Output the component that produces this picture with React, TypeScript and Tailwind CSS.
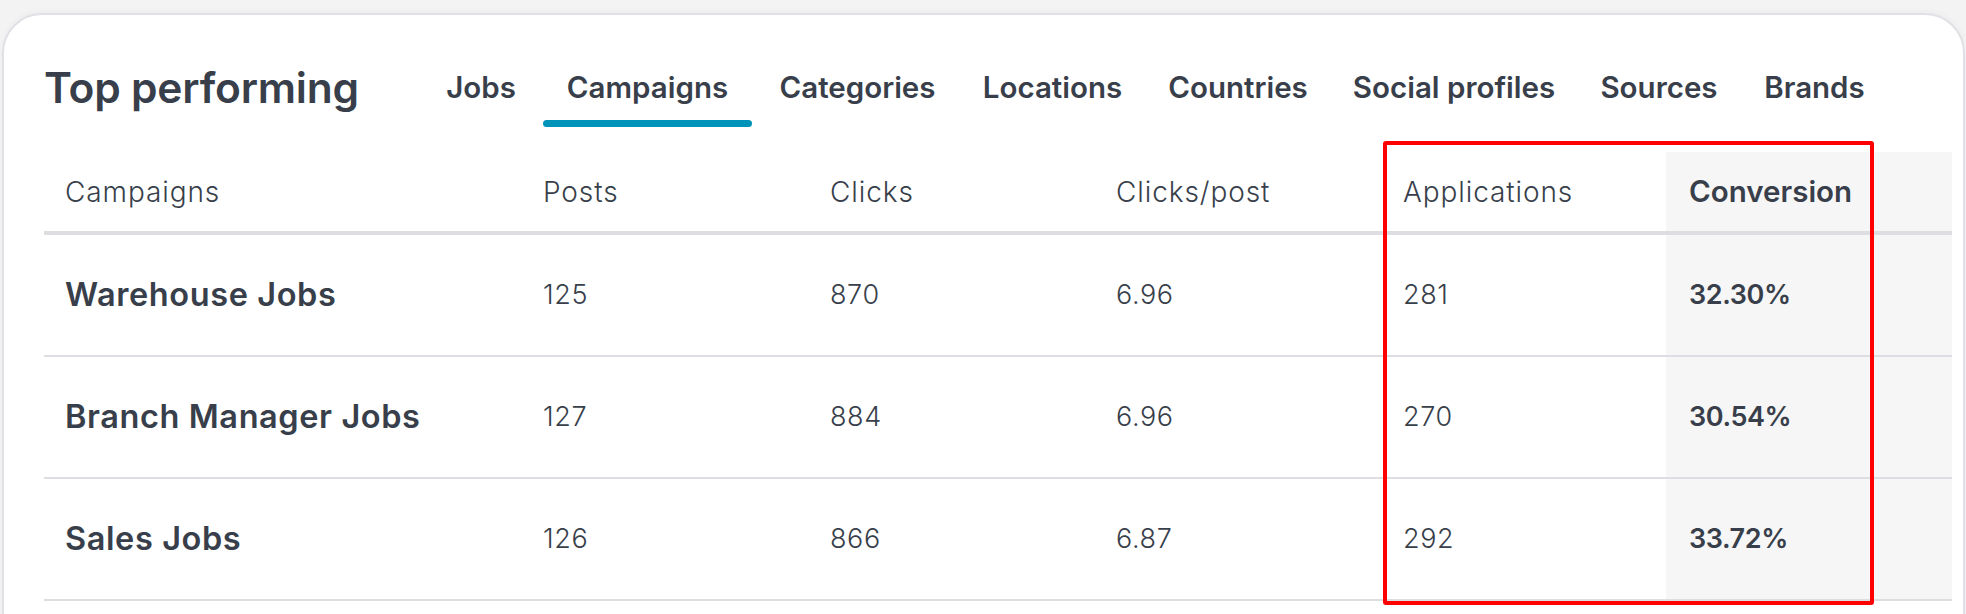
import React from "react";

const tabs = [
  { label: "Jobs", w: "w-[110px]" },
  { label: "Campaigns", w: "w-[209px]", active: true },
  { label: "Categories", w: "w-[197px]" },
  { label: "Locations", w: "w-[179px]" },
  { label: "Countries", w: "w-[178px]" },
  { label: "Social profiles", w: "w-[240px]" },
  { label: "Sources", w: "w-[156px]" },
  { label: "Brands", w: "w-[141px]" },
];

const rows = [
  ["Warehouse Jobs", "125", "870", "6.96", "281", "32.30%"],
  ["Branch Manager Jobs", "127", "884", "6.96", "270", "30.54%"],
  ["Sales Jobs", "126", "866", "6.87", "292", "33.72%"],
];

const font = { fontFamily: "Inter, 'Noto Sans', sans-serif" };

export default function App() {
  return (
    <div className="w-[1966px] h-[614px] overflow-hidden bg-[#f3f3f3] pt-[13px] pl-[2px]" style={font}>
      <div className="relative h-[640px] w-[1963px] rounded-t-[40px] border-2 border-[#dfe1e5] bg-white text-[#383f4b] shadow-[0_-2px_6px_rgba(0,0,0,0.03)]">
        <div className="flex items-start pl-[40px] pt-[49px]">
          <h1 className="w-[382px] text-[42.5px] leading-[48px] font-semibold tracking-[-0.2px]">Top performing</h1>
          <div className="mt-[5px] flex gap-[7px]">
            {tabs.map((t) => (
              <div key={t.label} className={`${t.w} flex flex-col items-center`}>
                <span className="text-[29.5px] leading-[36px] font-semibold whitespace-nowrap">{t.label}</span>
                <span className={`mt-[15px] h-[7px] w-full rounded-full ${t.active ? "bg-[#0093ba]" : "bg-transparent"}`} />
              </div>
            ))}
          </div>
        </div>

        <div className="mt-[25px] ml-[40px] grid grid-cols-[476px_287px_286px_287px_286px_286px]">
          {["Campaigns", "Posts", "Clicks", "Clicks/post", "Applications", "Conversion"].map((h, i) => (
            <div
              key={h}
              className={`flex h-[83px] items-center border-b-[4px] border-[#dcdee2] ${i === 0 ? "pl-[21px]" : "pl-[23px]"} ${
                i === 5 ? "bg-[#f6f6f6] text-[29.5px] font-semibold" : "text-[28px] font-light tracking-[0.9px]"
              }`}
            >
              {h}
            </div>
          ))}
          {rows.map((r) =>
            r.map((c, i) => (
              <div
                key={r[0] + i}
                className={`flex h-[122px] items-center border-b-2 border-[#dcdee2] ${i === 0 ? "pl-[21px]" : "pl-[23px]"} ${
                  i === 0
                    ? "text-[32.5px] font-semibold tracking-[0.6px]"
                    : i === 5
                    ? "bg-[#f6f6f6] text-[27px] font-semibold tracking-[-0.4px]"
                    : "text-[27px] font-light tracking-[0.6px]"
                }`}
              >
                {c}
              </div>
            ))
          )}
        </div>

        <div className="absolute left-[1379px] top-[126px] h-[464px] w-[491px] rounded-[3px] border-[4px] border-[#ff0000]" />
      </div>
    </div>
  );
}
